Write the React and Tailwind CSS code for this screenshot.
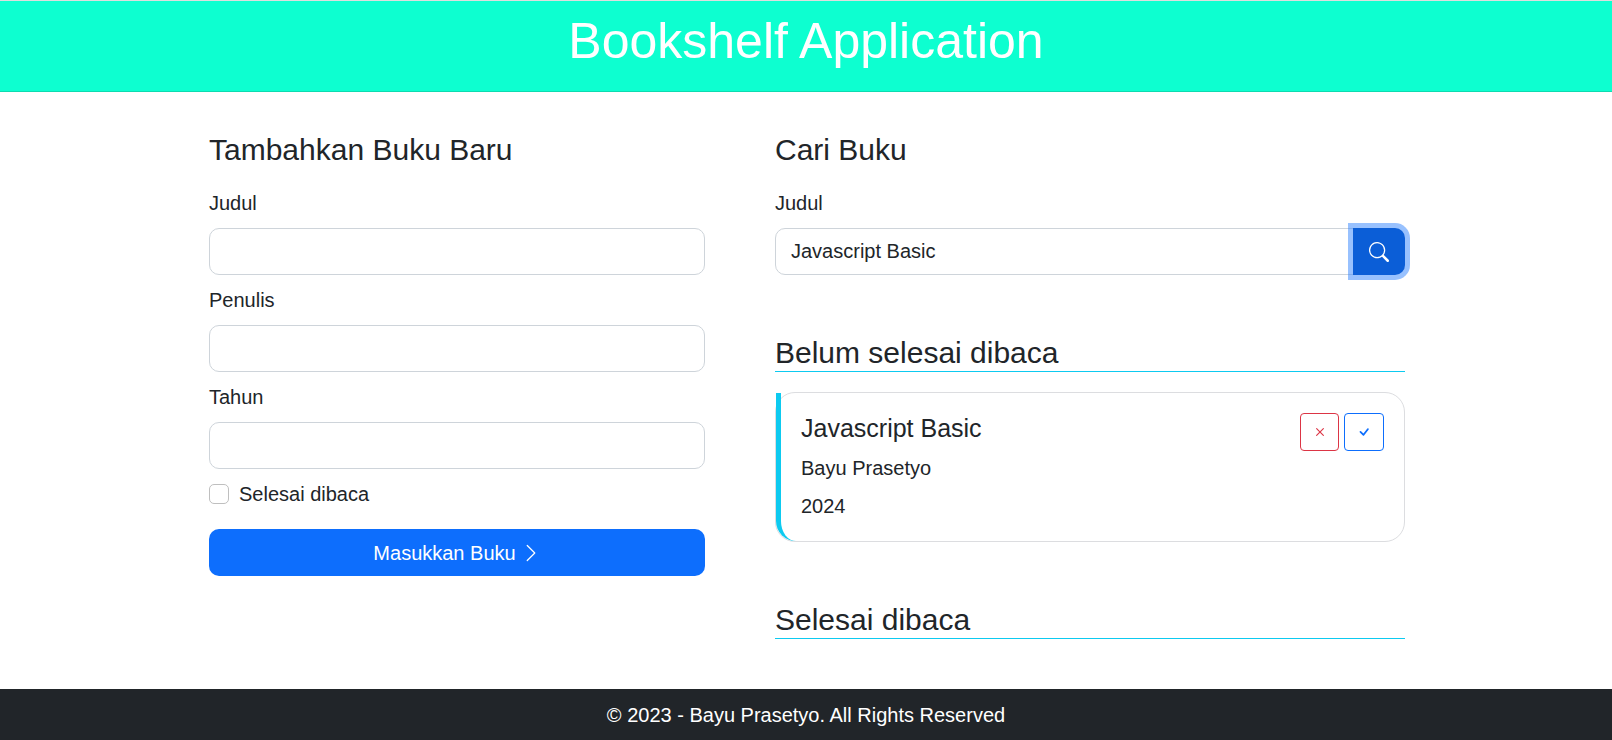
import { useState } from "react";
import { BsCheck, BsChevronRight, BsSearch, BsX } from "react-icons/bs";

const inputClass =
  "h-[47px] w-full min-w-0 border border-[#ced4da] bg-white px-[15px] text-[20px] leading-[30px] text-[#212529] outline-none focus:border-[#86b7fe]";

function Field({ id, label, type = "text" }) {
  return (
    <div className="flex flex-col gap-[10px]">
      <label htmlFor={id}>{label}</label>
      <input id={id} type={type} className={`${inputClass} rounded-[10px]`} />
    </div>
  );
}

function SectionTitle({ children }) {
  return (
    <h2 className="border-b border-[#0dcaf0] text-[30px] leading-[36px]">
      {children}
    </h2>
  );
}

function BookCard({ title, author, year }) {
  return (
    <article className="mt-5 rounded-[20px] border border-[#dcdde0]">
      <div className="flex items-start justify-between rounded-bl-[20px] border-l-[5px] border-[#0dcaf0] p-5">
        <div>
          <h3 className="mb-[10px] text-[25px] leading-[30px]">{title}</h3>
          <p className="mb-2">{author}</p>
          <p>{year}</p>
        </div>
        <div className="flex gap-[5px]">
          <button
            type="button"
            aria-label="Hapus buku"
            className="flex h-[38px] w-[39px] items-center justify-center rounded-[4px] border border-[#dc3545] text-[18px] text-[#dc3545]"
          >
            <BsX />
          </button>
          <button
            type="button"
            aria-label="Tandai selesai dibaca"
            className="flex h-[38px] w-[40px] items-center justify-center rounded-[4px] border border-[#0d6efd] text-[18px] text-[#0d6efd]"
          >
            <BsCheck />
          </button>
        </div>
      </div>
    </article>
  );
}

export default function App() {
  const [query, setQuery] = useState("Javascript Basic");

  return (
    <div className="flex min-h-screen flex-col bg-white font-['Liberation_Sans',Arial,sans-serif] text-[20px] leading-[30px] text-[#212529]">
      <header className="border-t border-b border-t-[#dedede] border-b-[#0edbb0] bg-[#0dffd0] pt-[10px] pb-5 text-center text-white">
        <h1 className="text-[50px] leading-[60px]">Bookshelf Application</h1>
      </header>

      <main className="mx-auto grid w-full max-w-[1198px] grow grid-cols-[496fr_630fr] gap-[70px] pt-10 pb-[50px] pl-0.5">
        <section>
          <h2 className="mb-5 text-[30px] leading-[36px]">Tambahkan Buku Baru</h2>
          <form className="flex flex-col gap-[10px]" onSubmit={(e) => e.preventDefault()}>
            <Field id="book-title" label="Judul" />
            <Field id="book-author" label="Penulis" />
            <Field id="book-year" label="Tahun" />
            <div className="flex items-center gap-[10px]">
              <input
                id="book-done"
                type="checkbox"
                className="size-5 appearance-none rounded-[5px] border border-[#bfbfbf] bg-white checked:border-[#0d6efd] checked:bg-[#0d6efd]"
              />
              <label htmlFor="book-done">Selesai dibaca</label>
            </div>
            <button
              type="submit"
              className="mt-[10px] flex h-[47px] items-center justify-center gap-[5px] rounded-[10px] bg-[#0d6efd] text-white"
            >
              Masukkan Buku
              <BsChevronRight />
            </button>
          </form>
        </section>

        <div>
          <section>
            <h2 className="mb-5 text-[30px] leading-[36px]">Cari Buku</h2>
            <form className="flex flex-col gap-[10px]" onSubmit={(e) => e.preventDefault()}>
              <label htmlFor="search-title">Judul</label>
              <div className="flex">
                <input
                  id="search-title"
                  type="text"
                  value={query}
                  onChange={(e) => setQuery(e.target.value)}
                  className={`${inputClass} rounded-l-[10px]`}
                />
                <button
                  type="submit"
                  aria-label="Cari"
                  className="z-10 -ml-px flex h-[47px] w-[52px] shrink-0 items-center justify-center rounded-r-[10px] bg-[#0b5ed7] text-white shadow-[0_0_0_5px_rgba(49,132,253,0.5)]"
                >
                  <BsSearch />
                </button>
              </div>
            </form>
          </section>

          <section className="mt-[60px]">
            <SectionTitle>Belum selesai dibaca</SectionTitle>
            <BookCard title="Javascript Basic" author="Bayu Prasetyo" year="2024" />
          </section>

          <section className="mt-[60px]">
            <SectionTitle>Selesai dibaca</SectionTitle>
          </section>
        </div>
      </main>

      <footer className="border-t border-[#212529] bg-[#212529] py-[10px] text-center text-white">
        © 2023 - Bayu Prasetyo. All Rights Reserved
      </footer>
    </div>
  );
}
